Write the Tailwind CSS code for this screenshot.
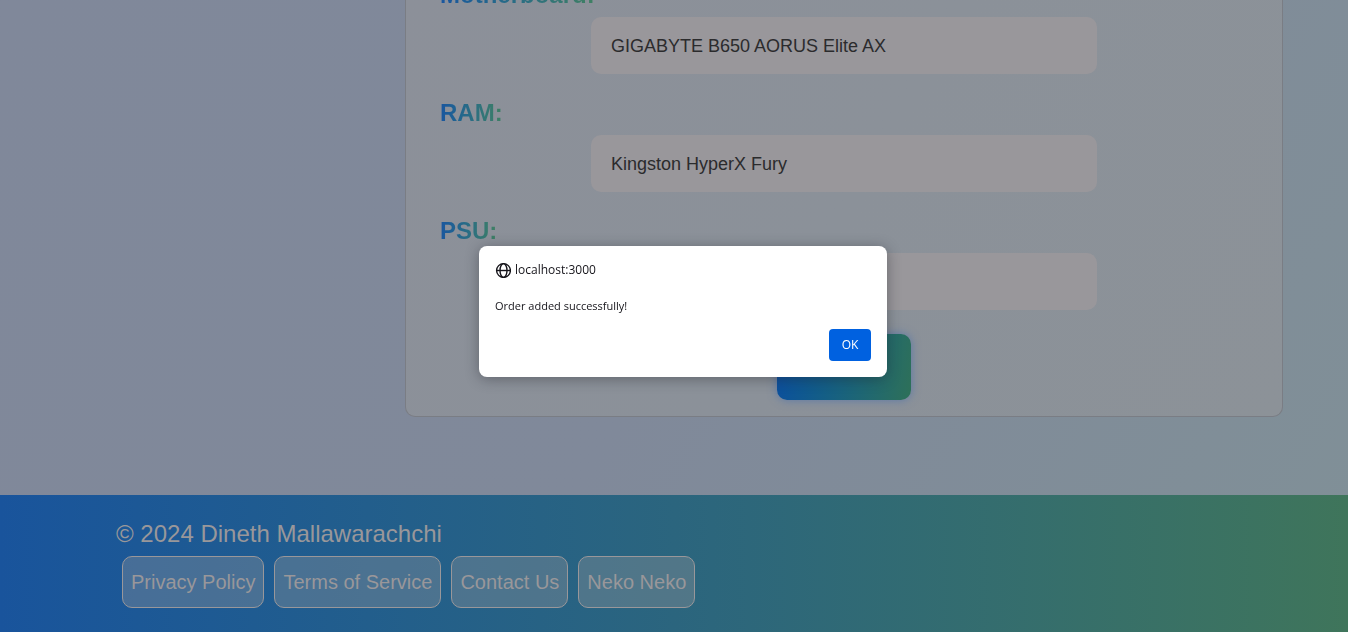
<!DOCTYPE html>
<html lang="en">
<head>
<meta charset="utf-8">
<meta name="viewport" content="width=device-width, initial-scale=1">
<title>Order</title>
<script src="https://cdn.jsdelivr.net/npm/@tailwindcss/browser@4"></script>
</head>
<body class="min-h-screen flex flex-col overflow-hidden bg-linear-120 from-[#80889a] via-[#80899a] to-[#809097] font-['Liberation_Sans',sans-serif]">
  <main class="-mt-[19px] pl-[405px] pr-[65px] pb-[78px]">
    <form class="flex flex-col gap-[25px] rounded-b-[10px] border border-t-0 border-[#7a7d84] bg-linear-120 from-[#8c9099] via-[#8b9199] to-[#8c9298] px-[34px] pb-4">
      <div class="flex flex-col items-start gap-[9px]">
        <label for="motherboard" class="bg-linear-to-r from-[#1a569f] to-[#408062] bg-clip-text text-2xl leading-[27px] font-bold text-transparent">Motherboard:</label>
        <input id="motherboard" type="text" value="GIGABYTE B650 AORUS Elite AX" class="h-[57px] w-[506px] self-center rounded-[10px] bg-[#99979b] px-5 pt-0.5 text-lg text-[#2b2b2d] outline-none">
      </div>
      <div class="flex flex-col items-start gap-[9px]">
        <label for="ram" class="bg-linear-to-r from-[#1a569f] to-[#408062] bg-clip-text text-2xl leading-[27px] font-bold text-transparent">RAM:</label>
        <input id="ram" type="text" value="Kingston HyperX Fury" class="h-[57px] w-[506px] self-center rounded-[10px] bg-[#99979b] px-5 pt-0.5 text-lg text-[#2b2b2d] outline-none">
      </div>
      <div class="flex flex-col items-start gap-[9px]">
        <label for="psu" class="bg-linear-to-r from-[#1a569f] to-[#408062] bg-clip-text text-2xl leading-[27px] font-bold text-transparent">PSU:</label>
        <input id="psu" type="text" class="h-[57px] w-[506px] self-center rounded-[10px] bg-[#99979b] px-5 pt-0.5 text-lg text-[#2b2b2d] outline-none">
      </div>
      <button type="submit" aria-label="Submit order" class="-mt-px h-[66px] w-[134px] self-center rounded-[10px] bg-linear-100 from-[#0d4da0] to-[#2e7058] shadow-[0_0_10px_#5a78a8]"></button>
    </form>
  </main>

  <footer class="grow bg-linear-to-r from-[#19549c] via-[#2b657e] to-[#3f755b] px-[116px] pt-[25px] pb-6 text-[#99979a]">
    <p class="text-2xl leading-7">© 2024 Dineth Mallawarachchi</p>
    <nav class="mt-2 ml-1.5 flex gap-2.5 text-xl">
      <a href="#" class="flex h-[52px] items-center rounded-[10px] border border-[#99979a] bg-[#99979a]/35 px-2">Privacy Policy</a>
      <a href="#" class="flex h-[52px] items-center rounded-[10px] border border-[#99979a] bg-[#99979a]/35 px-2">Terms of Service</a>
      <a href="#" class="flex h-[52px] items-center rounded-[10px] border border-[#99979a] bg-[#99979a]/35 px-2">Contact Us</a>
      <a href="#" class="flex h-[52px] items-center rounded-[10px] border border-[#99979a] bg-[#99979a]/35 px-2">Neko Neko</a>
    </nav>
  </footer>

  <div class="fixed inset-0 flex items-center justify-center pb-[9px] pl-[18px]">
    <section role="alertdialog" aria-labelledby="origin" aria-describedby="message" class="flex w-[408px] flex-col rounded-lg bg-white p-4 font-['Open_Sans',sans-serif] text-[11px] leading-4 text-[#15141a] shadow-[0_2px_14px_rgba(30,32,40,0.4)]">
      <h1 id="origin" class="flex items-center gap-1 text-[12px] leading-4 font-medium">
        <svg class="size-4" viewBox="0 0 16 16" fill="none" stroke="currentColor" stroke-width="1.4" aria-hidden="true">
          <circle cx="8.500" cy="8.500" r="6.900"/>
          <ellipse cx="8.500" cy="8.500" rx="3.500" ry="6.900"/>
          <path d="M1.600 8.500h13.800"/>
        </svg>
        <span>localhost:3000</span>
      </h1>
      <p id="message" class="mt-5">Order added successfully!</p>
      <button type="button" class="mt-[15px] h-8 w-[42px] self-end rounded-sm bg-[#0061e0] text-[12px] text-white">OK</button>
    </section>
  </div>
</body>
</html>
